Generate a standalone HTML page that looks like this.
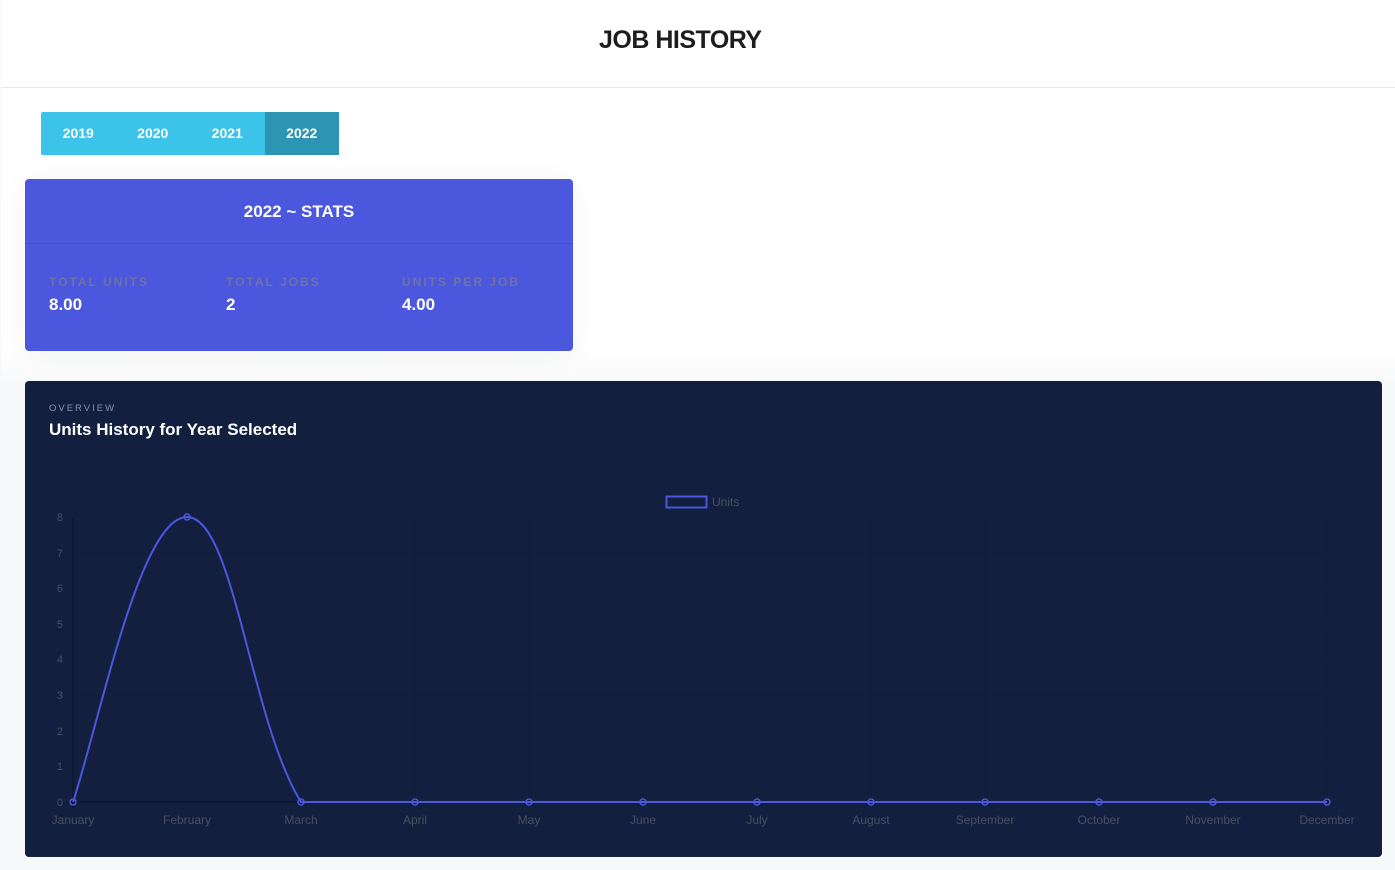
<!DOCTYPE html>
<html><head><style>
body{margin:0;width:1395px;height:870px;background:#f7f8fa;font-family:"Liberation Sans",sans-serif;position:relative;overflow:hidden}
.hdr{position:absolute;left:1px;top:0;width:1394px;height:87px;background:#fff;border-bottom:1px solid #e6e8ec}
.hdr h1{position:absolute;left:598px;width:162px;top:0;margin:0;line-height:80px;font-size:25px;font-weight:bold;color:#1d1d1f;text-align:center;letter-spacing:-0.5px;white-space:nowrap}
.wrap{position:absolute;left:1px;top:88px;width:1394px;height:782px;background:linear-gradient(#fff 0,#fff 260px,#f7f8fa 300px)}
.btns{position:absolute;left:41px;top:112px;width:298px;height:43px;background:#3cc3ea;border-radius:2px;display:flex}
.btns div{width:74.5px;line-height:43px;text-align:center;color:#fff;font-weight:bold;font-size:14px}
.btns .a{background:#2c95b3}
.stats{position:absolute;left:25px;top:179px;width:548px;height:172px;background:#4b57dc;border-radius:4px;box-shadow:0 4px 30px rgba(0,0,0,.05)}
.stats .t{height:64px;line-height:66px;text-align:center;color:#fff;font-weight:bold;font-size:17px;border-bottom:1px solid #4450cc}
.col{position:absolute;top:96px}
.col .l{font-size:12px;letter-spacing:2px;color:#6f72a6;font-weight:bold}
.col .v{font-size:17px;color:#fff;font-weight:bold;margin-top:6px}
.chart{position:absolute;left:25px;top:381px;width:1357px;height:476px;background:#121f3e;border-radius:4px}
</style></head><body>
<div class="hdr"><h1>JOB HISTORY</h1></div>
<div class="wrap"></div>
<div class="btns"><div>2019</div><div>2020</div><div>2021</div><div class="a">2022</div></div>
<div class="stats"><div class="t">2022 ~ STATS</div>
<div class="col" style="left:24px"><div class="l">TOTAL UNITS</div><div class="v">8.00</div></div>
<div class="col" style="left:201px"><div class="l">TOTAL JOBS</div><div class="v">2</div></div>
<div class="col" style="left:377px"><div class="l">UNITS PER JOB</div><div class="v">4.00</div></div>
</div>
<div class="chart"></div>
<svg style="position:absolute;left:0;top:0" width="1395" height="870" font-family="Liberation Sans, sans-serif">
<text x="49" y="411" font-size="9.5" letter-spacing="2" fill="#8a93ab">OVERVIEW</text>
<text x="49" y="435" font-size="17" font-weight="bold" fill="#fff">Units History for Year Selected</text>
<rect x="666.5" y="496.5" width="40" height="11" fill="none" stroke="#4b57dc" stroke-width="2"/>
<text x="712" y="506" font-size="12" fill="#4a5062">Units</text>
<g stroke="#111c38" stroke-width="1">
<line x1="73" y1="517" x2="1327" y2="517"/><line x1="73" y1="553" x2="1327" y2="553"/><line x1="73" y1="588" x2="1327" y2="588"/><line x1="73" y1="624" x2="1327" y2="624"/><line x1="73" y1="659" x2="1327" y2="659"/><line x1="73" y1="695" x2="1327" y2="695"/><line x1="73" y1="731" x2="1327" y2="731"/><line x1="73" y1="766" x2="1327" y2="766"/>
<line x1="187" y1="517" x2="187" y2="802"/><line x1="301" y1="517" x2="301" y2="802"/><line x1="415" y1="517" x2="415" y2="802"/><line x1="529" y1="517" x2="529" y2="802"/><line x1="643" y1="517" x2="643" y2="802"/><line x1="757" y1="517" x2="757" y2="802"/><line x1="871" y1="517" x2="871" y2="802"/><line x1="985" y1="517" x2="985" y2="802"/><line x1="1099" y1="517" x2="1099" y2="802"/><line x1="1213" y1="517" x2="1213" y2="802"/><line x1="1327" y1="517" x2="1327" y2="802"/>
</g>
<line x1="73" y1="517" x2="73" y2="808" stroke="#0a1226"/><line x1="67" y1="802" x2="1327" y2="802" stroke="#0a1226"/>
<g font-size="11" fill="#4a5062" text-anchor="end">
<text x="63" y="521">8</text><text x="63" y="557">7</text><text x="63" y="592">6</text><text x="63" y="628">5</text><text x="63" y="663">4</text><text x="63" y="699">3</text><text x="63" y="735">2</text><text x="63" y="770">1</text><text x="63" y="806">0</text>
</g>
<g font-size="12" fill="#4a5062" text-anchor="middle">
<text x="73" y="824">January</text><text x="187" y="824">February</text><text x="301" y="824">March</text><text x="415" y="824">April</text><text x="529" y="824">May</text><text x="643" y="824">June</text><text x="757" y="824">July</text><text x="871" y="824">August</text><text x="985" y="824">September</text><text x="1099" y="824">October</text><text x="1213" y="824">November</text><text x="1327" y="824">December</text>
</g>
<path d="M73 802 C100 720,140 517,187 517 C234 517,250 720,301 802 L1327 802" fill="none" stroke="#4b57dc" stroke-width="2"/>
<g fill="none" stroke="#4b57dc" stroke-width="1.5">
<circle cx="73" cy="802" r="3"/><circle cx="187" cy="517" r="3"/><circle cx="301" cy="802" r="3"/><circle cx="415" cy="802" r="3"/><circle cx="529" cy="802" r="3"/><circle cx="643" cy="802" r="3"/><circle cx="757" cy="802" r="3"/><circle cx="871" cy="802" r="3"/><circle cx="985" cy="802" r="3"/><circle cx="1099" cy="802" r="3"/><circle cx="1213" cy="802" r="3"/><circle cx="1327" cy="802" r="3"/>
</g>
</svg>
</body></html>
